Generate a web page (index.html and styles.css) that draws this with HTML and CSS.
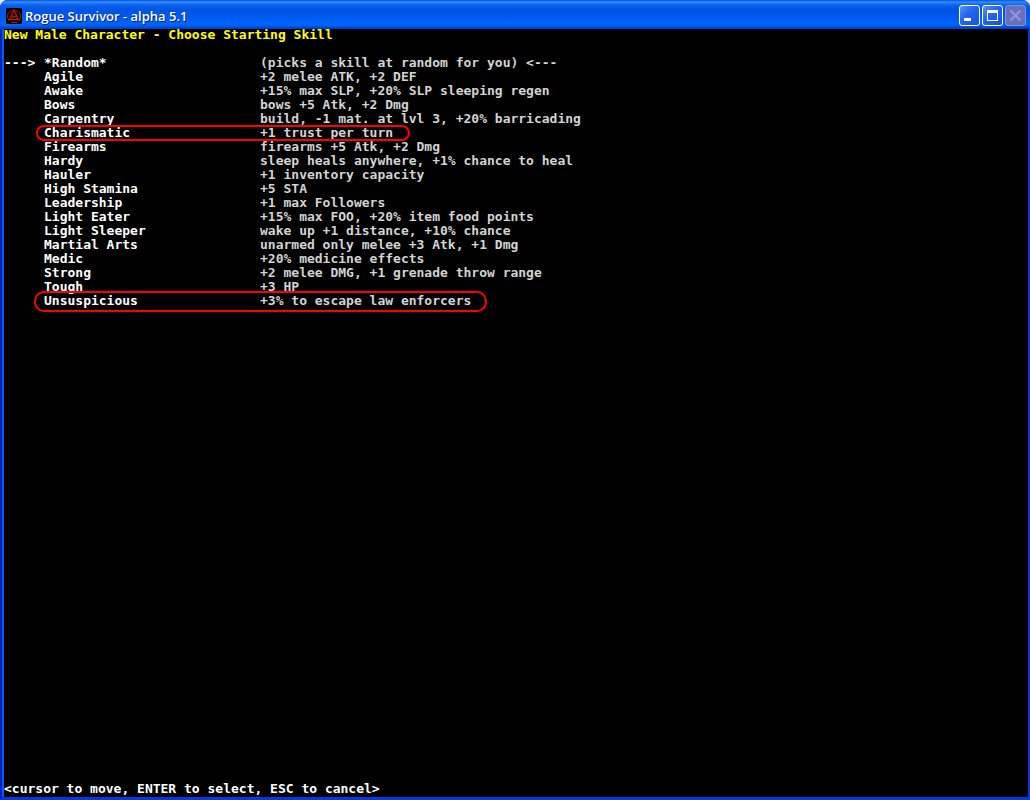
FILE: index.html
```html
<!DOCTYPE html>
<html lang="en">
<head>
    <meta charset="UTF-8">
    <meta name="viewport" content="width=device-width, initial-scale=1.0">
    <title>Rogue Survivor - alpha 5.1</title>
    <link rel="stylesheet" href="styles.css">
</head>
<body>
    <div class="window">
        <header class="titlebar">
            <svg class="app-icon" viewBox="0 0 16 16" aria-hidden="true">
                <rect width="16" height="16" fill="#000"/>
                <g fill="none" stroke="#c00c14">
                    <path d="M6 2.500C3 3.500 1.500 5.500 1.500 8s1 4 2.500 5.500M10 2.500c3 1 4.500 3 4.500 5.500s-1 4-2.500 5.500M5 14.500h6"/>
                    <path d="M8 1.500 4 11.500M8 1.500l4 10M5 8.500h6" stroke-width="1.500"/>
                    <path d="M2 11.500h12"/>
                </g>
            </svg>
            <h1>Rogue Survivor - alpha 5.1</h1>
            <div class="controls">
                <button type="button" aria-label="Minimize">
                    <svg viewBox="0 0 19 19"><path d="M4 12h7v3H4z" fill="#fff"/></svg>
                </button>
                <button type="button" aria-label="Maximize">
                    <svg viewBox="0 0 19 19"><path d="M4 4h11v11H4zM5 7v7h9V7z" fill="#fff" fill-rule="evenodd"/></svg>
                </button>
                <button type="button" aria-label="Close" disabled>
                    <svg viewBox="0 0 19 19"><path d="M4.500 4.500l10 10M14.500 4.500l-10 10" fill="none" stroke="#8c9ae0" stroke-width="2"/></svg>
                </button>
            </div>
        </header>
        <main>
            <h2>New Male Character - Choose Starting Skill</h2>
            <table>
                <tbody>
                    <tr><td class="cursor">---&gt;</td><th scope="row">*Random*</th><td>(picks a skill at random for you) &lt;---</td></tr>
                    <tr><td></td><th scope="row">Agile</th><td>+2 melee ATK, +2 DEF</td></tr>
                    <tr><td></td><th scope="row">Awake</th><td>+15% max SLP, +20% SLP sleeping regen</td></tr>
                    <tr><td></td><th scope="row">Bows</th><td>bows +5 Atk, +2 Dmg</td></tr>
                    <tr><td></td><th scope="row">Carpentry</th><td>build, -1 mat. at lvl 3, +20% barricading</td></tr>
                    <tr class="marked"><td></td><th scope="row">Charismatic</th><td>+1 trust per turn</td></tr>
                    <tr><td></td><th scope="row">Firearms</th><td>firearms +5 Atk, +2 Dmg</td></tr>
                    <tr><td></td><th scope="row">Hardy</th><td>sleep heals anywhere, +1% chance to heal</td></tr>
                    <tr><td></td><th scope="row">Hauler</th><td>+1 inventory capacity</td></tr>
                    <tr><td></td><th scope="row">High Stamina</th><td>+5 STA</td></tr>
                    <tr><td></td><th scope="row">Leadership</th><td>+1 max Followers</td></tr>
                    <tr><td></td><th scope="row">Light Eater</th><td>+15% max FOO, +20% item food points</td></tr>
                    <tr><td></td><th scope="row">Light Sleeper</th><td>wake up +1 distance, +10% chance</td></tr>
                    <tr><td></td><th scope="row">Martial Arts</th><td>unarmed only melee +3 Atk, +1 Dmg</td></tr>
                    <tr><td></td><th scope="row">Medic</th><td>+20% medicine effects</td></tr>
                    <tr><td></td><th scope="row">Strong</th><td>+2 melee DMG, +1 grenade throw range</td></tr>
                    <tr><td></td><th scope="row">Tough</th><td>+3 HP</td></tr>
                    <tr class="marked wide"><td></td><th scope="row">Unsuspicious</th><td>+3% to escape law enforcers</td></tr>
                </tbody>
            </table>
            <footer>&lt;cursor to move, ENTER to select, ESC to cancel&gt;</footer>
        </main>
    </div>
</body>
</html>
```
FILE: styles.css
```css
body {
    margin: 0;
    background: #ece9d8;
}

.window {
    box-sizing: border-box;
    min-height: 100vh;
    display: flex;
    flex-direction: column;
    border: solid #0838d8;
    border-width: 0 2px 3px 2px;
    border-left-color: #0420c0;
    border-radius: 8px 8px 0 0;
    background: #0838d8;
}

/* title bar */
.titlebar {
    display: flex;
    align-items: center;
    box-sizing: border-box;
    height: 29px;
    margin: 0 -2px;
    padding: 2px 4px 0 6px;
    border-radius: 8px 8px 0 0;
    background: linear-gradient(#0a50d8 0, #2f8cff 2px, #0a62ee 5px, #0054e3 10px, #0058ee 16px, #0066ff 24px, #005cf4 26px, #0038c0 29px);
}

.app-icon {
    width: 16px;
    height: 16px;
}

h1 {
    flex: 1;
    margin: 0 0 0 3px;
    font: 600 13px/20px "Open Sans", sans-serif;
    color: #fff;
    text-shadow: 1px 1px #0a1883;
}

.controls {
    display: flex;
    gap: 2px;
}

.controls button {
    width: 21px;
    height: 21px;
    padding: 0;
    border: 1px solid #fff;
    border-radius: 3px;
    background: linear-gradient(135deg, #5c94f4, #2468ec 40%, #1c5ce8 70%, #1850d0);
}

.controls button:disabled {
    border-color: #8590dc;
    background: #6870bc;
}

.controls svg {
    display: block;
    width: 19px;
    height: 19px;
}

/* game screen */
main {
    flex: 1;
    display: flex;
    flex-direction: column;
    align-items: flex-start;
    border-left: 2px solid #0a5ae8;
    background: #000;
    color: #fff;
    font: bold 13px/14px "DejaVu Sans Mono", monospace;
}

h2 {
    margin: 0 0 15px;
    font-size: 13px;
    line-height: 12px;
    color: #ff0;
}

table {
    border-collapse: collapse;
    color: #d3d3d3;
}

td,
th {
    height: 14px;
    padding: 0;
    text-align: left;
    white-space: nowrap;
}

td:first-child {
    width: 40px;
}

th {
    width: 216px;
    color: #fff;
}

.cursor {
    color: #fff;
}

/* red rings around the highlighted skills */
.marked th {
    position: relative;
}

.marked th::after {
    content: "";
    position: absolute;
    top: -1px;
    left: -8px;
    box-sizing: border-box;
    width: 374px;
    height: 16px;
    border: 2px solid #f00;
    border-radius: 8px;
}

.marked.wide th::after {
    top: -3px;
    left: -10px;
    width: 453px;
    height: 21px;
    border-radius: 10px;
}

footer {
    margin-top: auto;
    padding-bottom: 1px;
}
```
